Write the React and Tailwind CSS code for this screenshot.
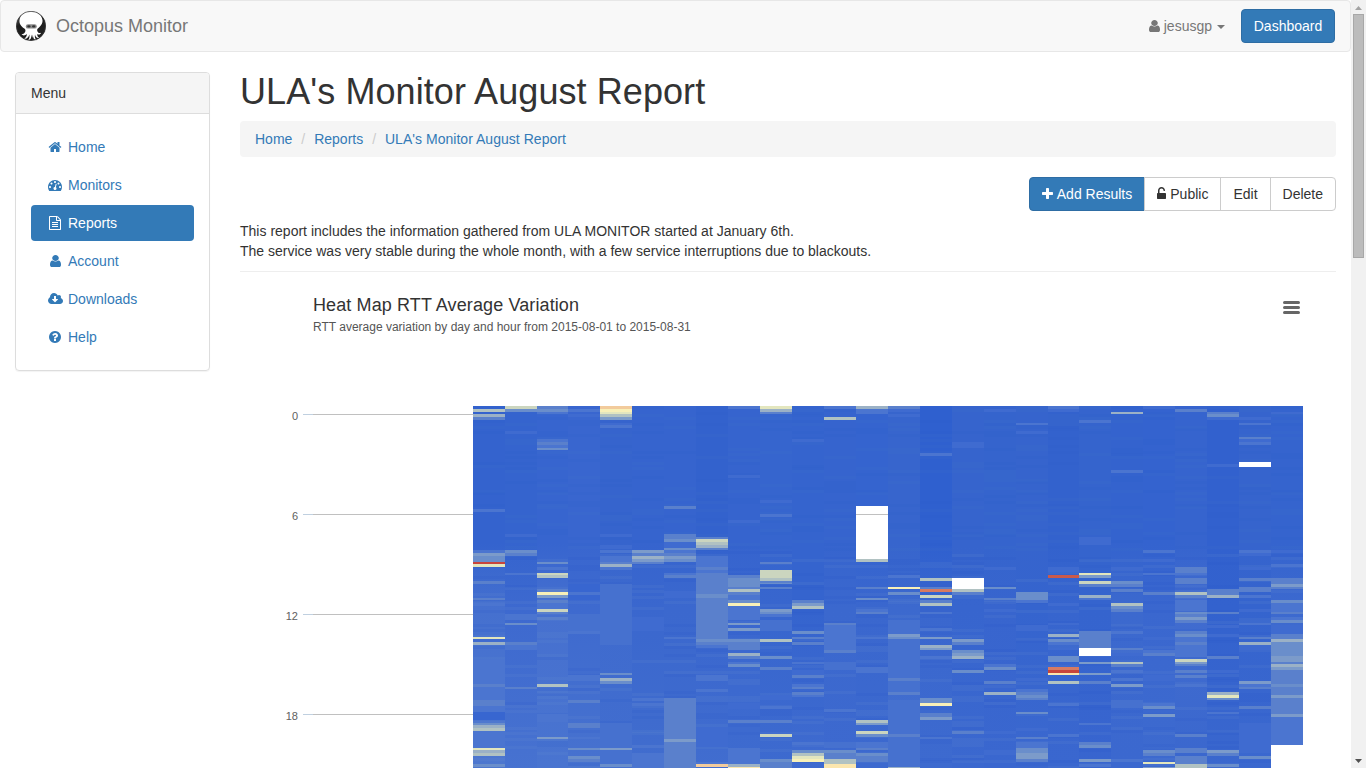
import React from "react";

const PATHS = {
  home: "M1472 992v480q0 26-19 45t-45 19h-384v-384h-256v384h-384q-26 0-45-19t-19-45v-480q0-1 .5-3t.5-3l575-474 575 474q1 2 1 6zm223-69l-62 74q-8 9-21 11h-3q-13 0-21-7l-692-577-692 577q-12 8-24 7-13-2-21-11l-62-74q-8-10-7-23.5t11-21.5l719-599q32-26 76-26t76 26l244 204v-195q0-14 9-23t23-9h192q14 0 23 9t9 23v408l219 182q10 8 11 21.5t-7 23.5z",
  gauge: "M384 1152q0-53-37.5-90.5t-90.5-37.5-90.5 37.5-37.5 90.5 37.5 90.5 90.5 37.5 90.5-37.5 37.5-90.5zm192-448q0-53-37.5-90.5t-90.5-37.5-90.5 37.5-37.5 90.5 37.5 90.5 90.5 37.5 90.5-37.5 37.5-90.5zm428 481l101-382q6-26-7.5-48.5t-38.5-29.5-48 6.5-30 39.5l-101 382q-60 5-107 43.5t-63 98.5q-20 77 20 146t117 89 146-20 89-117q16-60-6-117t-72-91zm660-33q0-53-37.5-90.5t-90.5-37.5-90.5 37.5-37.5 90.5 37.5 90.5 90.5 37.5 90.5-37.5 37.5-90.5zm-640-640q0-53-37.5-90.5t-90.5-37.5-90.5 37.5-37.5 90.5 37.5 90.5 90.5 37.5 90.5-37.5 37.5-90.5zm448 192q0-53-37.5-90.5t-90.5-37.5-90.5 37.5-37.5 90.5 37.5 90.5 90.5 37.5 90.5-37.5 37.5-90.5zm320 448q0 261-141 483-19 29-54 29h-1402q-35 0-54-29-141-221-141-483 0-182 71-348t191-286 286-191 348-71 348 71 286 191 191 286 71 348z",
  file: "M1596 380q28 28 48 76t20 88v1152q0 40-28 68t-68 28h-1344q-40 0-68-28t-28-68v-1600q0-40 28-68t68-28h896q40 0 88 20t76 48zm-444-244v376h376q-10-29-22-41l-313-313q-12-12-41-22zm384 1528v-1024h-416q-40 0-68-28t-28-68v-416h-768v1536h1280zm-1024-864q0-14 9-23t23-9h704q14 0 23 9t9 23v64q0 14-9 23t-23 9h-704q-14 0-23-9t-9-23v-64zm736 224q14 0 23 9t9 23v64q0 14-9 23t-23 9h-704q-14 0-23-9t-9-23v-64q0-14 9-23t23-9h704zm0 256q14 0 23 9t9 23v64q0 14-9 23t-23 9h-704q-14 0-23-9t-9-23v-64q0-14 9-23t23-9h704z",
  user: "M1536 1399q0 109-62.5 187t-150.5 78h-854q-88 0-150.5-78t-62.5-187q0-85 8.5-160.5t31.5-152 58.5-131 94-89 134.5-34.5q131 128 313 128t313-128q76 0 134.5 34.5t94 89 58.5 131 31.5 152 8.5 160.5zm-256-887q0 159-112.5 271.5t-271.5 112.5-271.5-112.5-112.5-271.5 112.5-271.5 271.5-112.5 271.5 112.5 112.5 271.5z",
  cloud: "M1216 928q0-14-9-23t-23-9h-224v-352q0-13-9.5-22.5t-22.5-9.5h-192q-13 0-22.5 9.5t-9.5 22.5v352h-224q-13 0-22.5 9.5t-9.5 22.5q0 14 9 23l352 352q9 9 23 9t23-9l351-351q10-12 10-24zm640 224q0 159-112.5 271.5t-271.5 112.5h-1088q-185 0-316.5-131.5t-131.5-316.5q0-130 70-240t188-165q-2-30-2-43 0-212 150-362t362-150q156 0 285.5 87t188.5 231q71-62 166-62 106 0 181 75t75 181q0 76-41 138 130 31 213.5 135.5t83.5 238.5z",
  help: "M1024 1376v-192q0-14-9-23t-23-9h-192q-14 0-23 9t-9 23v192q0 14 9 23t23 9h192q14 0 23-9t9-23zm256-672q0-88-55.5-163t-138.5-116-170-41q-243 0-371 213-15 24 8 42l132 100q7 6 19 6 16 0 25-12 53-68 86-92 34-24 86-24 48 0 85.5 26t37.5 59q0 38-20 61t-68 45q-63 28-115.5 86.5t-52.5 125.5v36q0 14 9 23t23 9h192q14 0 23-9t9-23q0-19 21.5-49.5t54.5-49.5q32-18 49-28.5t46-35 44.5-48 28-60.5 12.5-81zm384 192q0 209-103 385.5t-279.5 279.5-385.5 103-385.5-103-279.5-279.5-103-385.5 103-385.5 279.5-279.5 385.5-103 385.5 103 279.5 279.5 103 385.5z",
  plus: "M1600 736v192q0 40-28 68t-68 28h-416v416q0 40-28 68t-68 28h-192q-40 0-68-28t-28-68v-416h-416q-40 0-68-28t-28-68v-192q0-40 28-68t68-28h416v-416q0-40 28-68t68-28h192q40 0 68 28t28 68v416h416q40 0 68 28t28 68z",
  unlock: "M1376 768q40 0 68 28t28 68v576q0 40-28 68t-68 28h-960q-40 0-68-28t-28-68v-576q0-40 28-68t68-28h32v-320q0-185 131.5-316.5t316.5-131.5 316.5 131.5 131.5 316.5q0 26-19 45t-45 19h-64q-26 0-45-19t-19-45q0-106-75-181t-181-75-181 75-75 181v320h736z",
};

function Icon({ name, box = "0 0 1792 1792", className = "h-3.5 w-3.5" }) {
  return (
    <svg viewBox={box} preserveAspectRatio="none" fill="currentColor" className={`shrink-0 ${className}`}>
      <path d={PATHS[name]} />
    </svg>
  );
}

const SHADES = {
  a: "#3f6bd0", b: "#4b75d0", c: "#5a80cc", d: "#6a8ecb", e: "#7c9bca",
  f: "#9bb1c6", g: "#b1c2c2", h: "#cbd5bf", i: "#e3e6be", j: "#f8f0b8",
  J: "#fbe6ae", k: "#f2cb9c", l: "#d67a62", L: "#cb5a4a", m: "#c8453c",
  w: "#ffffff", y: "#4671cf", z: "#3866d0",
};

const EDGES = [473, 505, 537, 568, 600, 632, 664, 696, 728, 760, 792, 824, 856, 888, 920, 952, 984, 1016, 1048, 1079, 1111, 1143, 1175, 1207, 1239, 1271, 1303];

// One entry per day: colour at the top, in the middle and at the bottom, then "y height shade" readings.
const DAYS = [
  ["#3463ce", "#4570cf", "#4d77cf", "409 3 g,414 3 f,417 3 c,509 3 b,550 3 b,553 3 e,556 6 d,562 2 m,564 3 i,581 3 c,598 2 c,603 3 b,637 2 i,639 3 a,642 3 f,659 53 b,684 3 c,700 6 c,712 8 z,723 2 d,725 3 f,728 3 g,731 17 b,748 2 i,750 3 f,753 3 g,764 3 d"],
  ["#3564ce", "#3d69cf", "#4772d0", "406 3 h,409 3 d,431 3 a,534 3 a,550 3 d,553 3 c,573 2 b,614 6 b,623 2 d,642 3 c,645 5 b,687 2 c"],
  ["#3765cf", "#4670cf", "#4974d0", "406 3 c,409 3 d,412 2 b,439 3 b,442 3 c,445 3 b,448 2 d,562 2 d,567 3 b,573 2 h,575 3 g,589 3 c,592 3 j,595 3 e,600 3 c,603 6 b,609 3 h,612 2 c,617 3 c,684 3 g,714 8 b,737 2 e"],
  ["#3966cf", "#3e6acf", "#4772cf", "409 3 b,414 3 a,584 8 z,592 3 b,595 5 z,614 17 y,631 3 b,675 6 b,700 3 c,723 5 c,737 2 b,748 2 d,756 3 d,759 3 c"],
  ["#3664cd", "#3f6bce", "#416dcf", "406 3 k,409 3 j,412 2 i,414 3 g,417 3 e,423 2 a,425 3 b,534 3 a,545 4 a,550 3 b,556 6 b,562 2 c,564 3 f,567 3 b,584 61 y,673 2 d,678 3 f,681 3 d,723 45 y,748 2 e,764 3 d"],
  ["#3664ce", "#3a67ce", "#416dce", "550 3 e,553 3 c,556 3 f,559 3 e,562 2 c,617 14 a,698 3 b,703 3 b,745 3 b,753 15 b"],
  ["#3664ce", "#3b68ce", "#3f6bce", "506 3 c,534 3 c,537 2 c,539 3 d,542 6 a,548 2 d,550 3 b,553 3 c,556 3 e,559 3 d,573 2 b,575 3 c,591 7 a,637 2 b,698 70 c,739 3 e"],
  ["#3362cd", "#3966ce", "#416dcf", "537 2 c,539 3 h,542 3 g,545 3 f,548 2 c,556 11 b,567 3 c,570 3 b,573 69 c,594 4 d,639 3 d,642 3 c,645 3 b,675 6 b,689 3 b,727 20 a,762 2 b,764 3 k"],
  ["#3664ce", "#3a67cf", "#3e6bcf", "406 3 b,475 3 a,520 3 a,575 3 c,578 9 d,587 2 c,589 3 g,592 3 c,595 5 b,600 3 d,603 3 j,606 14 b,623 2 e,628 3 e,639 3 d,642 8 c,653 3 f,656 3 c,662 2 b,664 3 d,703 6 a,720 3 c,748 16 b,764 3 f,767 1 J"],
  ["#3665ce", "#3866ce", "#3d6acf", "406 3 i,409 3 f,412 2 c,500 3 a,514 3 b,562 2 c,570 8 h,578 3 g,581 3 c,583 1 d,587 2 c,609 3 e,612 2 d,614 3 b,620 11 y,639 3 g,656 3 d,667 3 c,695 5 a,706 3 b,720 3 c,734 3 h,759 3 d,762 6 c"],
  ["#3564ce", "#3564ce", "#3f6bcf", "439 3 a,600 3 c,603 3 e,606 3 g,631 3 d,637 2 c,642 3 c,662 2 b,670 5 a,675 3 c,684 3 b,687 2 c,692 3 c,695 2 b,742 3 b,750 3 d,753 3 g,756 3 i,759 3 j"],
  ["#3664ce", "#3b68ce", "#3d69cf", "406 3 b,417 3 g,623 2 c,625 25 b,650 3 c,662 8 y,709 3 b,742 6 y,750 3 d,753 6 c,759 5 g,764 4 J"],
  ["#3564cf", "#3a67ce", "#3c69cf", "406 3 f,409 3 b,412 2 b,506 53 w,559 3 g,587 2 c,598 2 d,609 3 b,612 2 c,637 2 b,667 6 b,720 3 g,723 2 e,731 3 h,734 3 d,742 6 b,748 2 c,753 3 d,756 6 c"],
  ["#3765cd", "#3c69ce", "#446fcf", "406 3 c,409 3 a,414 3 a,575 3 b,587 2 j,592 3 d,620 75 y,634 3 e,637 2 d,678 3 c,692 3 c,700 68 y,734 3 c,767 1 f"],
  ["#2f60cf", "#3a67ce", "#3d6acf", "453 3 b,578 3 g,587 2 c,589 3 l,595 3 h,600 3 c,603 3 g,612 2 b,628 3 b,637 2 e,645 3 f,648 2 e,656 3 b,698 5 d,703 3 j,713 4 c,717 3 e,737 2 b"],
  ["#3664cd", "#3765ce", "#3b68cf", "442 6 a,578 11 w,589 3 g,592 3 c,639 3 e,642 3 c,650 3 d,653 3 e,656 3 f,670 3 d,731 3 c"],
  ["#3564cd", "#3865ce", "#3a67cf", "409 3 a,567 3 a,587 2 d,598 2 c,609 3 a,664 3 b,667 3 d,681 3 c,692 3 f,731 3 a,750 5 a"],
  ["#3664cd", "#3564ce", "#3b68cf", "423 2 b,431 3 a,592 3 d,595 5 d,600 3 b,625 6 a,678 3 a,689 3 b,692 3 c,695 3 d,698 2 c,712 2 d,728 3 a,737 2 c,742 6 b,748 5 d,753 6 e,759 3 c"],
  ["#3362cd", "#3765ce", "#3a67cf", "406 3 b,409 3 a,567 5 a,575 3 L,603 3 a,623 2 a,634 3 f,639 3 d,642 3 b,648 2 a,656 6 d,667 3 l,670 3 m,673 2 J,681 3 g,703 3 b,734 3 b"],
  ["#3564cd", "#3564ce", "#3865cf", "420 3 b,537 8 a,573 2 i,575 3 e,581 3 h,584 3 c,595 3 f,598 2 b,631 17 c,648 8 w,662 2 e,673 2 e,681 3 c,723 2 b,742 3 c,745 3 d,759 3 e,764 3 b"],
  ["#3463ce", "#3c69ce", "#3b68cf", "412 2 f,470 3 b,567 3 a,581 3 d,584 3 c,589 3 c,603 3 g,606 3 d,609 3 c,631 3 b,648 2 c,653 3 a,662 2 g,664 3 c,670 3 b,678 3 b,684 3 e,700 8 y,759 3 b"],
  ["#3463cf", "#3a67cf", "#3d6acf", "406 3 a,550 3 b,559 3 a,573 2 b,592 3 c,637 3 a,650 3 b,653 3 c,675 6 a,703 3 b,706 3 d,714 3 e,750 3 d,753 3 c,762 2 i,767 1 e"],
  ["#3664ce", "#416ccf", "#3a67ce", "409 3 c,567 6 c,573 2 b,578 6 c,592 3 g,595 3 c,600 11 b,612 2 d,614 3 c,617 3 e,620 3 c,631 3 c,634 3 d,637 20 b,642 3 c,659 3 h,662 2 e,664 2 c,670 3 c,675 3 c,684 3 b,734 3 c,748 5 c,756 8 c,764 4 g"],
  ["#3261ce", "#3362ce", "#3a67ce", "412 2 c,414 3 d,417 3 a,464 3 a,589 6 c,595 3 f,612 2 c,625 3 a,634 3 a,656 3 c,670 3 a,692 3 f,695 3 i,698 2 d,712 2 b,750 3 e,753 3 c,764 3 d"],
  ["#3664cd", "#3564ce", "#3b68cf", "417 3 a,423 2 b,437 2 c,439 3 a,442 3 b,462 5 w,550 3 b,553 3 a,567 3 a,578 3 c,587 5 c,595 3 b,609 3 a,623 2 b,637 2 c,642 3 f,645 5 a,681 3 e,684 3 b,687 2 c,706 3 c,723 30 a,756 3 d"],
  ["#3564ce", "#3c69cf", "#4a74cf", "412 2 a,550 3 a,564 3 b,578 6 c,584 3 e,587 2 c,600 3 d,603 9 b,612 2 c,617 3 b,620 3 d,625 9 a,634 83 c,639 3 f,642 14 d,656 6 e,664 3 f,667 3 e,684 3 d,695 3 e,714 3 e,717 28 b,745 23 w"],
].map(([top, mid, bottom, readings]) => ({
  top, mid, bottom,
  cells: readings.split(",").map((r) => {
    const [y, h, shade] = r.split(" ");
    return { y: +y, h: +h, fill: SHADES[shade] };
  }),
}));

// Faint row-to-row variation between the stronger readings.
const ROWS = Array.from({ length: 130 }, (_, i) => Math.round(406 + i * 2.79));
const ripple = (c, r) => {
  const v = Math.sin((c + 1) * 12.9898 + (r + 1) * 78.233) * 43758.5453;
  return v - Math.floor(v);
};

function HeatMap() {
  return (
    <svg viewBox="240 380 1096 388" className="block h-[388px] w-[1096px]" shapeRendering="crispEdges" fontFamily="'Liberation Sans', sans-serif">
      <defs>
        {DAYS.map((d, i) => (
          <linearGradient key={i} id={`day${i}`} x1="0" y1="0" x2="0" y2="1">
            <stop offset="0" stopColor={d.top} />
            <stop offset="0.38" stopColor={d.top} />
            <stop offset="0.56" stopColor={d.mid} />
            <stop offset="1" stopColor={d.bottom} />
          </linearGradient>
        ))}
      </defs>
      {DAYS.map((d, i) => {
        const x = EDGES[i];
        const w = EDGES[i + 1] - x;
        return (
          <g key={i}>
            <rect x={x} y="406" width={w} height="362" fill={`url(#day${i})`} />
            {ROWS.map((y, r) => {
              const v = ripple(i, r);
              return v > 0.72 ? (
                <rect key={r} x={x} y={y} width={w} height="3" fill={v > 0.86 ? "#6f93d4" : "#2458cc"} opacity={y > 550 ? 0.13 : 0.04} />
              ) : null;
            })}
            {d.cells.map((c, k) => (
              <rect key={`c${k}`} x={x} y={c.y} width={w} height={c.h} fill={c.fill} />
            ))}
          </g>
        );
      })}
      {[[0, 414], [6, 514], [12, 614], [18, 714]].map(([label, y]) => (
        <g key={label}>
          <rect x="303" y={y} width="10" height="1" fill="#c0d0e0" />
          <rect x="313" y={y} width="160" height="1" fill="#c0c0c0" />
          <text x="298" y={y + 6} fontSize="11" textAnchor="end" fill="#606060" shapeRendering="auto">{label}</text>
        </g>
      ))}
      <rect x="856" y="514" width="32" height="1" fill="#c0c0c0" />
    </svg>
  );
}

function OctopusLogo() {
  return (
    <svg viewBox="0 0 30 30" className="h-[30px] w-[30px]">
      <defs>
        <linearGradient id="disc" x1="0" y1="0" x2="0.6" y2="1">
          <stop offset="0" stopColor="#777" />
          <stop offset="0.4" stopColor="#1c1c1c" />
          <stop offset="1" stopColor="#222" />
        </linearGradient>
        <clipPath id="round"><circle cx="15" cy="15" r="15" /></clipPath>
      </defs>
      <g clipPath="url(#round)">
        <circle cx="15" cy="15" r="15" fill="url(#disc)" />
        <path d="M3.500 9C4.500 3.500 9 .6 15 .6S25.500 3.500 26.500 9C26.900 12.500 24.500 15.500 21.800 17.500C20.800 18.500 21 20 22 21.200C22.800 22.300 24 22.300 25 21.800C24.800 23.800 22.500 24 21.200 23C21.200 25 22 26.500 23.300 26.800C21.200 27.800 19.500 26 19 23.500C18.600 25.500 19 27.500 20 28.500C18 29 17 27 16.800 23.500L16.300 27L15.600 23.500C15.500 27 14.500 29.300 12.300 29C13.500 27.500 13.700 25.500 13.400 23.500C12.500 26.500 10.500 28.300 8.300 27.500C10 26.500 10.800 25 10.900 23C9.300 24.700 6.800 25 5.500 23.300C7.500 23.300 8.800 22 9.300 20.500C9.700 19 9.300 18.300 8.300 17.500C5 15.500 3 12.500 3.500 9Z" fill="#fff" />
        <rect x="9.800" y="13.200" width="11" height="4.400" rx="2.200" fill="#8a8a8a" />
        <ellipse cx="12.900" cy="15.400" rx="1.700" ry="1.100" fill="#333" />
        <ellipse cx="17.700" cy="15.400" rx="1.700" ry="1.100" fill="#333" />
      </g>
      <circle cx="15" cy="15" r="14.700" fill="none" stroke="#444" strokeWidth="0.600" />
    </svg>
  );
}

const MENU = [
  ["Home", "home"],
  ["Monitors", "gauge"],
  ["Reports", "file"],
  ["Account", "user"],
  ["Downloads", "cloud"],
  ["Help", "help"],
];

function MenuIcon({ name }) {
  if (name === "cloud") return <Icon name="cloud" box="-64 0 1920 1792" className="h-3.5 w-[15px]" />;
  if (name === "user") return <Icon name="user" box="256 0 1280 1792" className="h-3.5 w-[11px]" />;
  return <Icon name={name} />;
}

export default function App() {
  return (
    <div className="flex h-[768px] w-[1366px] overflow-hidden bg-white font-['Liberation_Sans',Arial,sans-serif] text-sm leading-5 text-[#333]">
      <div className="flex h-full w-[1351px] flex-col">
        <nav className="flex h-[52px] shrink-0 items-center justify-between rounded border border-[#e7e7e7] bg-[#f8f8f8] pr-[15px] pl-[15px] text-[#777]">
          <div className="flex items-center gap-2.5">
            <OctopusLogo />
            <span className="text-lg leading-5">Octopus Monitor</span>
          </div>
          <div className="flex items-center">
            <Icon name="user" box="256 0 1280 1792" className="mr-1 h-3.5 w-[11px]" />
            <span>jesusgp</span>
            <svg viewBox="0 0 8 4" className="mt-0.5 mr-4 ml-[5px] h-1 w-2" fill="currentColor"><path d="M0 0H8L4 4Z" /></svg>
            <button className="h-[34px] w-[94px] rounded border border-[#2e6da4] bg-[#337ab7] text-white">Dashboard</button>
          </div>
        </nav>

        <div className="flex gap-[30px] pt-5 pr-[15px] pl-[15px]">
          <aside className="h-[299px] w-[195px] shrink-0 rounded border border-[#ddd] shadow-[0_1px_1px_rgba(0,0,0,0.05)]">
            <div className="h-[41px] rounded-t-[3px] border-b border-[#ddd] bg-[#f5f5f5] px-[15px] py-2.5">Menu</div>
            <ul className="flex flex-col gap-0.5 px-[15px] pt-[15px]">
              {MENU.map(([label, icon]) => (
                <li key={label} className={`flex h-9 items-center gap-1 rounded pl-[15px] ${label === "Reports" ? "bg-[#337ab7] text-white" : "text-[#337ab7]"}`}>
                  <span className="flex w-[18px] justify-center"><MenuIcon name={icon} /></span>
                  <span>{label}</span>
                </li>
              ))}
            </ul>
          </aside>

          <main className="w-[1096px] shrink-0">
            <h1 className="h-[39px] text-4xl leading-[39px] font-normal tracking-[0.08px]">ULA's Monitor August Report</h1>
            <ol className="mt-2.5 flex h-9 items-center rounded bg-[#f5f5f5] px-[15px] text-[#337ab7]">
              <li>Home</li>
              <li className="w-[21.800px] text-center text-[#ccc]">/</li>
              <li>Reports</li>
              <li className="w-[21.800px] text-center text-[#ccc]">/</li>
              <li className="tracking-[0.03px]">ULA's Monitor August Report</li>
            </ol>
            <div className="mt-5 flex h-[34px] justify-end">
              <button className="flex items-center gap-1 rounded-l border border-[#2e6da4] bg-[#337ab7] px-3 text-white">
                <Icon name="plus" box="192 0 1408 1792" className="h-3.5 w-[11px]" />Add Results
              </button>
              <button className="-ml-px flex items-center gap-1 border border-[#ccc] px-3"><Icon name="unlock" box="320 0 1152 1792" className="h-3.5 w-[9px]" />Public</button>
              <button className="-ml-px border border-[#ccc] px-3">Edit</button>
              <button className="-ml-px rounded-r border border-[#ccc] px-3">Delete</button>
            </div>
            <p className="mt-2.5"><span className="tracking-[0.01px]">This report includes the information gathered from ULA MONITOR started at January 6th.</span><br />The service was very stable during the whole month, with a few service interruptions due to blackouts.</p>
            <hr className="mt-2.5 border-t border-[#eee]" />
            <section>
              <div className="flex h-[108px] justify-between pt-[23px] pr-[36px] pl-[73px]">
                <div>
                  <h2 className="text-lg leading-5 font-normal tracking-[0.11px] text-[#333]">Heat Map RTT Average Variation</h2>
                  <p className="mt-1 text-xs leading-4 text-[#555]">RTT average variation by day and hour from 2015-08-01 to 2015-08-31</p>
                </div>
                <svg viewBox="0 0 17 15" className="mt-1.5 h-[15px] w-[17px]" stroke="#666" strokeWidth="3" strokeLinecap="round">
                  <path d="M1.500 1.500H15.500M1.500 6.500H15.500M1.500 11.500H15.500" />
                </svg>
              </div>
              <HeatMap />
            </section>
          </main>
        </div>
      </div>

      <div className="flex h-full w-[15px] flex-col items-center bg-[#f1f1f1]">
        <svg viewBox="0 0 15 14" className="h-3.5 w-[15px] shrink-0"><path d="M4 10L7.500 6L11 10Z" fill="#a3a3a3" /></svg>
        <div className="h-[244px] w-[11px] shrink-0 border border-[#a8a8a8] bg-[#bcbcbc]" />
        <div className="grow" />
        <svg viewBox="0 0 15 14" className="h-3.5 w-[15px] shrink-0"><path d="M4 5L7.500 9L11 5Z" fill="#505050" /></svg>
      </div>
    </div>
  );
}
